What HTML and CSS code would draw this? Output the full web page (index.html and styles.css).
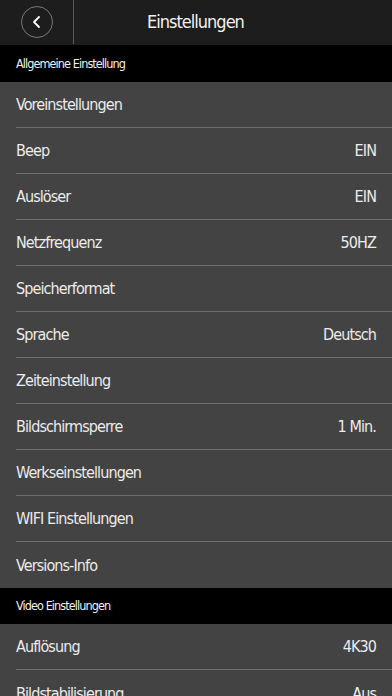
FILE: index.html
```html
<!DOCTYPE html>
<html lang="de">
<head>
    <meta charset="UTF-8">
    <title>Einstellungen</title>
    <link rel="stylesheet" href="styles.css">
</head>
<body>
    <div class="topbar">
        <div class="back-area">
            <div class="back-btn">
                <svg width="14" height="14" viewBox="0 0 14 14">
                    <path d="M9 2 L4 7 L9 12" fill="none" stroke="#fff" stroke-width="1.8" stroke-linecap="round" stroke-linejoin="round"/>
                </svg>
            </div>
        </div>
        <div class="title">Einstellungen</div>
    </div>

    <div class="section">Allgemeine Einstellung</div>
    <div class="list">
        <div class="row"><span>Voreinstellungen</span><span class="value"></span></div>
        <div class="row"><span>Beep</span><span class="value">EIN</span></div>
        <div class="row"><span>Auslöser</span><span class="value">EIN</span></div>
        <div class="row"><span>Netzfrequenz</span><span class="value">50HZ</span></div>
        <div class="row"><span>Speicherformat</span><span class="value"></span></div>
        <div class="row"><span>Sprache</span><span class="value">Deutsch</span></div>
        <div class="row"><span>Zeiteinstellung</span><span class="value"></span></div>
        <div class="row"><span>Bildschirmsperre</span><span class="value">1 Min.</span></div>
        <div class="row"><span>Werkseinstellungen</span><span class="value"></span></div>
        <div class="row"><span>WIFI Einstellungen</span><span class="value"></span></div>
        <div class="row"><span>Versions-Info</span><span class="value"></span></div>
    </div>

    <div class="section">Video Einstellungen</div>
    <div class="list">
        <div class="row"><span>Auflösung</span><span class="value">4K30</span></div>
        <div class="row"><span>Bildstabilisierung</span><span class="value">Aus</span></div>
    </div>
</body>
</html>
```

FILE: styles.css
```css
body {
    margin: 0;
    background-color: #434343;
    color: #ececec;
    font-family: "DejaVu Sans Condensed", "Liberation Sans", sans-serif;
    overflow: hidden;
}
.topbar {
    display: flex;
    height: 45px;
    background-color: #1d1d1d;
    border-bottom: 1px solid #000;
}
.back-area {
    width: 74px;
    display: flex;
    align-items: center;
    padding-left: 21px;
    box-sizing: border-box;
    border-right: 1px solid #5a5a5a;
    height: 44px;
}
.back-btn {
    width: 30px;
    height: 30px;
    border: 1px solid #777;
    border-radius: 50%;
    display: flex;
    align-items: center;
    justify-content: center;
}
.title {
    flex: 1;
    text-align: center;
    line-height: 44px;
    font-size: 18px;
    letter-spacing: -1px;
    color: #f2f2f2;
    padding-right: 75px;
}
.section {
    background-color: #000;
    height: 36px;
    line-height: 36px;
    padding-left: 16px;
    font-size: 12.5px;
    letter-spacing: -0.9px;
    color: #f0f0f0;
}
.list {
    padding-left: 16px;
}
.row {
    display: flex;
    justify-content: space-between;
    align-items: center;
    height: 45px;
    padding-right: 16px;
    border-bottom: 1px solid #6e6e6e;
    font-size: 16px;
    letter-spacing: -0.9px;
}
.row:last-child {
    border-bottom: none;
    height: 46px;
}
```
